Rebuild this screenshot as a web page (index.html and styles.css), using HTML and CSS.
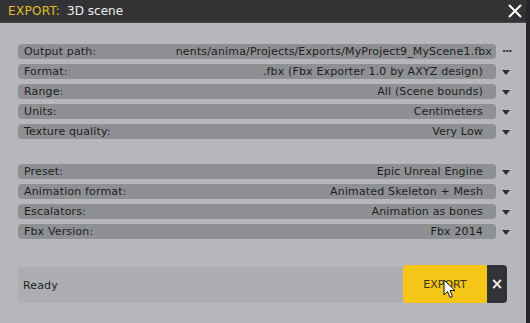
FILE: index.html
```html
<!DOCTYPE html>
<html lang="en">
<head>
  <meta charset="UTF-8">
  <title>Export: 3D scene</title>
  <link rel="stylesheet" href="styles.css">
</head>
<body>
  <div class="window">
    <div class="titlebar">
      <span class="title-key">EXPORT:</span>
      <span class="title-name">3D scene</span>
      <svg class="title-close" width="14" height="14" viewBox="0 0 14 14">
        <path d="M1 1 L13 13 M13 1 L1 13" stroke="#fff" stroke-width="2" fill="none"/>
      </svg>
    </div>

    <div class="panel">
      <div class="group">
        <div class="field">
          <div class="box">
            <span class="label">Output path:</span>
            <span class="value path"><span>nents/anima/Projects/Exports/MyProject9_MyScene1.fbx</span></span>
          </div>
          <span class="dots">&middot;&middot;&middot;</span>
        </div>
        <div class="field">
          <div class="box">
            <span class="label">Format:</span>
            <span class="value"><span>.fbx (Fbx Exporter 1.0 by AXYZ design)</span></span>
          </div>
          <span class="arrow"></span>
        </div>
        <div class="field">
          <div class="box">
            <span class="label">Range:</span>
            <span class="value"><span>All (Scene bounds)</span></span>
          </div>
          <span class="arrow"></span>
        </div>
        <div class="field">
          <div class="box">
            <span class="label">Units:</span>
            <span class="value"><span>Centimeters</span></span>
          </div>
          <span class="arrow"></span>
        </div>
        <div class="field">
          <div class="box">
            <span class="label">Texture quality:</span>
            <span class="value"><span>Very Low</span></span>
          </div>
          <span class="arrow"></span>
        </div>
      </div>

      <div class="group second">
        <div class="field">
          <div class="box">
            <span class="label">Preset:</span>
            <span class="value"><span>Epic Unreal Engine</span></span>
          </div>
          <span class="arrow"></span>
        </div>
        <div class="field">
          <div class="box">
            <span class="label">Animation format:</span>
            <span class="value"><span>Animated Skeleton + Mesh</span></span>
          </div>
          <span class="arrow"></span>
        </div>
        <div class="field">
          <div class="box">
            <span class="label">Escalators:</span>
            <span class="value"><span>Animation as bones</span></span>
          </div>
          <span class="arrow"></span>
        </div>
        <div class="field">
          <div class="box">
            <span class="label">Fbx Version:</span>
            <span class="value"><span>Fbx 2014</span></span>
          </div>
          <span class="arrow"></span>
        </div>
      </div>

      <div class="footer">
        <div class="status">Ready</div>
        <button class="export-btn">EXPORT</button>
        <button class="cancel-btn">&times;</button>
        <svg class="cursor" width="13" height="20" viewBox="0 0 13 20">
          <path d="M1 1 L1 16 L4.5 12.5 L7 18.5 L9.5 17.5 L7 11.5 L12 11.5 Z" fill="#fff" stroke="#111" stroke-width="1" stroke-linejoin="round"/>
        </svg>
      </div>
    </div>
  </div>
</body>
</html>
```

FILE: styles.css
```css
body {
  margin: 0;
  font-family: "DejaVu Sans", Verdana, sans-serif;
  background-color: #b5b7ba;
}
.window {
  width: 530px;
  height: 323px;
  box-sizing: border-box;
  display: flex;
  flex-direction: column;
  background-color: #b5b7ba;
  border-right: 4px solid #25252c;
  overflow: hidden;
}
.titlebar {
  height: 22px;
  flex-shrink: 0;
  background-color: #333335;
  border-bottom: 1px solid #4a4a4e;
  display: flex;
  align-items: center;
  padding-left: 8px;
  font-size: 12px;
  margin-right: -4px;
}
.title-key {
  color: #e2bf2a;
  letter-spacing: 0.3px;
}
.title-name {
  color: #eee;
  margin-left: 7px;
}
.title-close {
  margin-left: auto;
  margin-right: 8px;
}
.panel {
  padding: 21px 0 0 18px;
}
.group {
  display: flex;
  flex-direction: column;
  gap: 5px;
}
.group.second {
  margin-top: 25px;
}
.field {
  display: flex;
  align-items: center;
  height: 15px;
}
.box {
  width: 478px;
  height: 15px;
  display: flex;
  align-items: center;
  background-color: #8f9093;
  border-radius: 4px;
  font-size: 11px;
  letter-spacing: 0.15px;
  color: #1e1e1e;
}
.label {
  width: 150px;
  flex-shrink: 0;
  padding-left: 6px;
  white-space: nowrap;
}
.value {
  flex: 1;
  display: flex;
  justify-content: flex-end;
  white-space: nowrap;
  padding-right: 13px;
}
.value span {
  flex-shrink: 0;
}
.value.path {
  padding-right: 4px;
}
.arrow {
  margin-left: 6px;
  width: 0;
  height: 0;
  border-left: 4px solid transparent;
  border-right: 4px solid transparent;
  border-top: 5px solid #2c2c2e;
  margin-top: 2px;
}
.dots {
  margin-left: 6px;
  font-size: 11px;
  color: #2c2c2e;
  letter-spacing: -1px;
  font-weight: bold;
  line-height: 11px;
}
.footer {
  position: relative;
  display: flex;
  align-items: flex-end;
  margin-top: 26px;
  height: 38px;
}
.status {
  width: 380px;
  height: 36px;
  padding-left: 5px;
  background-color: #adaeb1;
  display: flex;
  align-items: center;
  font-size: 11px;
  letter-spacing: 0.15px;
  color: #1e1e1e;
}
.export-btn {
  width: 84px;
  height: 38px;
  border: none;
  border-radius: 4px 0 0 4px;
  background-color: #f5c518;
  color: #3a3422;
  font-family: "DejaVu Sans", Verdana, sans-serif;
  font-size: 11px;
  padding: 0;
  cursor: pointer;
}
.cancel-btn {
  width: 20px;
  height: 38px;
  border: none;
  border-radius: 0 4px 4px 0;
  background-color: #333336;
  color: #eee;
  font-family: "DejaVu Sans", Verdana, sans-serif;
  font-size: 15px;
  font-weight: bold;
  padding: 0;
  cursor: pointer;
}
.cursor {
  position: absolute;
  left: 425px;
  top: 14px;
}
```
